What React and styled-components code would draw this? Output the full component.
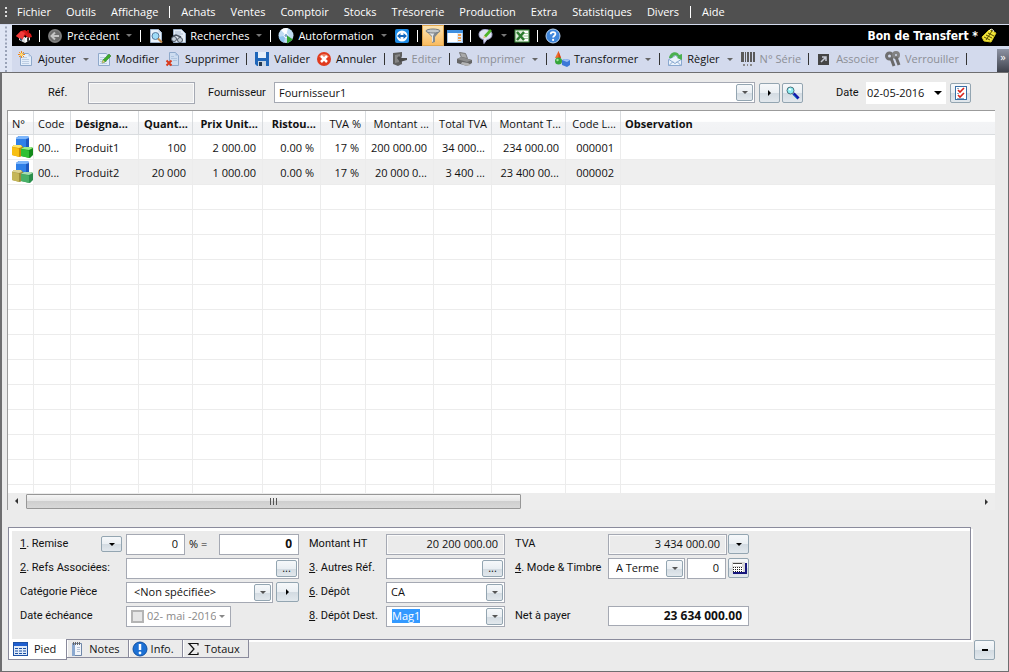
import React, { useState } from 'react';
import styled, { createGlobalStyle, css } from 'styled-components';

const uiFont = '"Open Sans", "Noto Sans", sans-serif';
const labelFont = 'Roboto, "Liberation Sans", sans-serif';
const titleFont = '"DejaVu Sans Condensed", "Noto Sans", sans-serif';

const GlobalStyle = createGlobalStyle`
    * { box-sizing: border-box; }
    body {
        margin: 0;
        background: #ebebeb;
        font-family: ${uiFont};
        font-size: 11px;
        line-height: 16px;
        color: #111;
    }
    button, input, select {
        margin: 0;
        padding: 0;
        border: 0;
        background: none;
        color: inherit;
        font: inherit;
    }
`;

/* ---------- icons ---------- */

const Svg = styled.svg`
    flex: none;
`;

const Icon = ({ size = 16, children }) => (
    <Svg width={size} height={size} viewBox="0 0 16 16" aria-hidden="true">
        {children}
    </Svg>
);

const HomeIcon = () => (
    <Icon>
        <path d="M3 7l6 2v6l-6-3z" fill="#d9d9d9" />
        <path d="M9 10l5-3v5l-5 3z" fill="#f8f8f8" />
        <path d="M0 8l5-5 4-1 6 4 1 3-4 1-3-3-3 5z" fill="#d81818" />
        <path d="M0 8l5-5 4 2-3 7z" fill="#f03c3c" />
        <path d="M11 2h2v4l-2-1z" fill="#b31010" />
        <path d="M11 10l2-1v4l-2 1z" fill="#333" />
        <path d="M4 10l2 1v2l-2-1z" fill="#357" />
    </Icon>
);

const BackIcon = () => (
    <Icon>
        <circle cx="8" cy="8" r="7" fill="#6c6c6c" />
        <circle cx="8" cy="8" r="6" fill="none" stroke="#858585" />
        <path d="M12 8H5M8 4.5L4.5 8 8 11.5" fill="none" stroke="#c4c4c4" strokeWidth="2" />
    </Icon>
);

const PreviewIcon = () => (
    <Icon>
        <path d="M2.5 1.500h8l3 3v10h-11z" fill="#e9f2fb" stroke="#9fb4cc" />
        <path d="M10.500 1.500v3h3z" fill="#bfd0e4" />
        <circle cx="7.500" cy="8" r="3.500" fill="#9edcf8" stroke="#56799c" />
        <path d="M10 10.500l4 4" stroke="#c28b4c" strokeWidth="2" />
    </Icon>
);

const SearchDocIcon = () => (
    <Icon>
        <path d="M3.500 1.500h8l4 4v9h-12z" fill="#e6edf6" stroke="#9db0c8" />
        <path d="M5 4h6M5 6h8" stroke="#a9bad0" />
        <circle cx="4" cy="11" r="2.500" fill="#c3cdd8" stroke="#4a5563" />
        <circle cx="10" cy="12" r="2.500" fill="#c3cdd8" stroke="#4a5563" />
        <path d="M3 8l3-1 5 2" fill="none" stroke="#4a5563" strokeWidth="1.500" />
    </Icon>
);

const DiscIcon = () => (
    <Icon>
        <circle cx="8" cy="7.500" r="7.500" fill="#bfdcf3" />
        <path d="M8 7.500L3 2A7.500 7.500 0 0 1 10 .3z" fill="#fff" />
        <path d="M8 7.500L.7 9a7.500 7.500 0 0 0 5 5.500z" fill="#8fc3ec" />
        <circle cx="8" cy="7.500" r="2" fill="#7fa8cb" stroke="#fff" />
        <path d="M9 7.500l6 4-6 4z" fill="#2fa52f" />
    </Icon>
);

const RemoteIcon = () => (
    <Icon>
        <rect x="1" y="1" width="14" height="14" rx="2" fill="#1d8be6" />
        <circle cx="8" cy="8" r="5.500" fill="#fff" />
        <path d="M3 8l3.500-3v2h3V5L13 8l-3.500 3V9h-3v2z" fill="#1668bd" />
    </Icon>
);

const FilterIcon = () => (
    <Icon>
        <path d="M1 3l6 6v6l3-1V9l5-6z" fill="#83898e" />
        <path d="M3 4l4 4v6l1-.5V8l2-4z" fill="#e3e6e8" />
        <ellipse cx="8" cy="3" rx="7" ry="2" fill="#c3c7ca" stroke="#777d82" />
    </Icon>
);

const PanelIcon = () => (
    <Icon>
        <rect x="0.500" y="2.500" width="15" height="12" fill="#fff" stroke="#9fc3ea" />
        <path d="M0 2h16v3H0z" fill="#3f8fe0" />
        <path d="M10 5h5v9h-5z" fill="#dcebfa" />
        <path d="M11 6h3v2h-3zM11 9h3v2h-3zM11 12h3v1h-3z" fill="#f0a050" />
    </Icon>
);

const ChatIcon = () => (
    <Icon>
        <path d="M7 1.500c4 0 7 2 7 5s-2 4.500-5 5l-3 4-.5-4C2.500 11 1 9 1 6.500s2-5 6-5z" fill="#dfe3f4" stroke="#a4a6cc" />
        <path d="M6 7.500l2 2L14 3l-2-2z" fill="#4fb52b" />
        <path d="M6 7.500l2 2-3 1z" fill="#e8c48a" />
    </Icon>
);

const ExcelIcon = () => (
    <Icon>
        <rect x="1" y="2" width="14" height="12" fill="#dcebd8" stroke="#3f8b3f" />
        <path d="M10 3h4v10h-4z" fill="#fff" />
        <path d="M10 5.500h4M10 8h4M10 10.500h4" stroke="#9cc79a" />
        <path d="M3 4l7 8M10 4l-7 8" stroke="#2b7a2e" strokeWidth="2.500" />
    </Icon>
);

const HelpIcon = () => (
    <Icon>
        <circle cx="8" cy="8" r="7" fill="#3f86dc" stroke="#b9d2ef" />
        <path d="M5.700 6.300C5.700 3.400 10.400 3.500 10.400 6c0 1.600-2.300 1.800-2.300 3.600" fill="none" stroke="#fff" strokeWidth="1.800" />
        <circle cx="8.100" cy="11.900" r="1.100" fill="#fff" />
    </Icon>
);

const NoteIcon = () => (
    <Icon>
        <path d="M1 9l7-7 7 3-5 9-7-1z" fill="#f3e63c" stroke="#d8ca20" />
        <path d="M3 9l6 3M5 7l6 3M7 5l6 3M5 12l6-9" stroke="#5a4e00" />
        <path d="M8 3l2-2 2 1 1 2" fill="none" stroke="#fffbd0" />
    </Icon>
);

const Sheet = () => (
    <>
        <path d="M2.500 2.500h8l3 3v9h-11z" fill="#e4eefa" stroke="#8fa9cb" />
        <path d="M10.500 2.500v3h3z" fill="#b5c8e2" />
        <path d="M4 6.500h5M4 8.500h7M4 10.500h7M4 12.500h7" stroke="#bccde3" />
    </>
);

const AddIcon = () => (
    <Icon>
        <Sheet />
        <path d="M3.500 0v7M0 3.500h7M1 1l5 5M6 1L1 6" stroke="#f08a1c" />
        <circle cx="3.500" cy="3.500" r="1.500" fill="#ffe27a" />
    </Icon>
);

const EditIcon = () => (
    <Icon>
        <Sheet />
        <path d="M6 12l1-3 6-6 2 2-6 6z" fill="#3cab2b" stroke="#247518" strokeWidth="0.500" />
        <path d="M6 12l1-3 2 2z" fill="#f1c98c" />
    </Icon>
);

const DeleteIcon = () => (
    <Icon>
        <path d="M4.500 1.500h6l3 3v10h-9z" fill="#cddcf0" stroke="#8fa9cb" />
        <path d="M10.500 1.500v3h3z" fill="#a0b9dc" />
        <path d="M6 5.500h3M6 7.500h6M8 9.500h4" stroke="#afc4df" />
        <path d="M1.500 9.500l5 5M6.500 9.500l-5 5" stroke="#d93a1c" strokeWidth="2" />
    </Icon>
);

const SaveIcon = () => (
    <Icon>
        <path d="M1 1h14v14H3l-2-2z" fill="#1f66ba" />
        <path d="M4 1h8v6H4z" fill="#e4eefa" />
        <path d="M4 10h8v5H4z" fill="#c8d4e2" />
        <path d="M5 11h3v4H5z" fill="#24384f" />
    </Icon>
);

const CancelIcon = () => (
    <Icon>
        <circle cx="8" cy="8" r="7" fill="#e03a1e" />
        <path d="M3 6a5.500 5 0 0 1 10 0z" fill="#f08468" />
        <path d="M5 5l6 6M11 5l-6 6" stroke="#fff" strokeWidth="2.500" />
    </Icon>
);

const EditorIcon = () => (
    <Icon>
        <path d="M1 2l9-1v4l-1 3 1 3v2l-4 2-5-2z" fill="#5e5e5e" />
        <path d="M3 4l5-1v3L7 11l-4 1z" fill="#858585" />
        <path d="M5 7l3 4 7-2V7H9L7 5z" fill="#4c4c4c" />
    </Icon>
);

const PrintIcon = () => (
    <Icon>
        <path d="M2.500 1.500l6 1 2 5-6-1z" fill="#a9a9a9" stroke="#777" />
        <path d="M0 8l4-2 11 3v3l-5 3L0 12z" fill="#666" />
        <path d="M0 8l4-2 11 3-5 2z" fill="#8d8d8d" />
        <path d="M5 11l6 1 3 2-4 1-6-2z" fill="#b4b4b4" />
    </Icon>
);

const ShapesIcon = () => (
    <Icon>
        <path d="M4.500 0L7 7H1z" fill="#f0702c" />
        <path d="M4.500 0L7 7H4.500z" fill="#d8401a" />
        <circle cx="4.500" cy="10" r="3.500" fill="#35a53a" />
        <circle cx="3.500" cy="9" r="1.200" fill="#a5e2a0" />
        <path d="M8 9l3-1 5 1v5l-3 2-5-2z" fill="#3c78d8" />
        <path d="M8 9l3-1 5 1-3 2z" fill="#9cc0f4" />
    </Icon>
);

const PayIcon = () => (
    <Icon>
        <path d="M1.500 8.500l7-4 6 4v6h-13z" fill="#eaf2fb" stroke="#8aa9d0" />
        <path d="M2 8.500l6 4 6-4M2 14.500l4-4M14 14.500l-4-4" fill="none" stroke="#8aa9d0" />
        <path d="M2 7c1-7 9-7 10-3l3-1v6l-5-2 1-1C9 3 6 4 5 7z" fill="#4bb050" />
    </Icon>
);

const BarcodeIcon = () => (
    <Icon>
        <path d="M1 1h3v10H1zM5 1h1v10H5zM7 1h2v10H7zM10 1h2v10h-2zM13 1h2v10h-2z" fill="#5a5a5a" />
        <path d="M3 13h2v2H3zM7 13h1v2H7zM10 13h2v2h-2z" fill="#8a8a8a" />
    </Icon>
);

const LinkIcon = () => (
    <Icon>
        <rect x="2" y="3" width="11" height="11" fill="#454545" />
        <path d="M5 11l5-5M6 6h4v4" fill="none" stroke="#c7cbd6" strokeWidth="1.500" />
    </Icon>
);

const KeysIcon = () => (
    <Icon>
        <circle cx="4.500" cy="5" r="3" fill="none" stroke="#707070" strokeWidth="3" />
        <circle cx="11" cy="4" r="2.500" fill="none" stroke="#828282" strokeWidth="3" />
        <path d="M6 7l3 8M11 6l3 8" stroke="#6a6a6a" strokeWidth="3" />
    </Icon>
);

const CubesSvg = styled.svg`
    display: block;
    margin-left: auto;
`;

const CubesIcon = ({ muted }) => (
    <CubesSvg width="22" height="22" viewBox="0 0 22 22" aria-hidden="true">
        <path d="M5 2l3-2h9l1 2v9l-3 2H5z" fill="#1c58c0" />
        <path d="M5 2l3-2h9l1 2-3 1H5z" fill="#7db6fb" />
        <path d="M5 3h10v9H5z" fill="#2f80e8" />
        <path d="M1 11l2-2h7l2 2v8l-3 2-8-2z" fill={muted ? '#9c8c3a' : '#c78a04'} />
        <path d="M1 11l2-2h7l1 2-3 1z" fill={muted ? '#ddd391' : '#ffe76a'} />
        <path d="M1 11l7 1.500V21l-7-2z" fill={muted ? '#c5b658' : '#f7bf12'} />
        <path d="M10 13l3-2h7l2 1v7l-3 3-9-2z" fill={muted ? '#2a8e4c' : '#138a1a'} />
        <path d="M10 13l3-2h7l2 1-4 2z" fill={muted ? '#a8dcb0' : '#9cec86'} />
        <path d="M10 13l8 1.500V22l-8-2z" fill={muted ? '#49b167' : '#2fc032'} />
    </CubesSvg>
);

const MagnifierIcon = () => (
    <Icon>
        <circle cx="5.500" cy="5.500" r="3.500" fill="#8ff0f4" stroke="#49717c" />
        <path d="M4 4l2 1" stroke="#fff" strokeWidth="1.500" />
        <path d="M8.500 8.500l5 5" stroke="#1218a8" strokeWidth="3" />
        <path d="M8 9.500l4 4.500" stroke="#2da0dc" />
    </Icon>
);

const ChecklistIcon = () => (
    <Icon>
        <rect x="2.500" y="1.500" width="11" height="13" fill="#fff" stroke="#3a6ea5" />
        <path d="M5 5l2 2 4-4M5 10l2 2 4-4" fill="none" stroke="#d8221a" strokeWidth="1.600" />
        <path d="M4 3.500h2M4 8.500h2M4 13.500h7" stroke="#8aa7c7" />
    </Icon>
);

const CalculatorIcon = () => (
    <Icon>
        <path d="M1 2h13v11H1z" fill="#d8d8d8" />
        <path d="M2 3h9v3H2z" fill="#fff" />
        <path d="M2 3.500h9" stroke="#444" />
        <path d="M2 7h10v5H2z" fill="#fff" />
        <path d="M2 7.500h10M2 9.500h10M2 11.500h10" stroke="#222" strokeDasharray="1 1" />
        <path d="M2 13h13V3" fill="none" stroke="#15157c" strokeWidth="2" />
    </Icon>
);

const TableIcon = () => (
    <Icon>
        <rect x="0.500" y="1.500" width="14" height="13" fill="#dfeaf8" stroke="#1c50a4" />
        <path d="M1 2h13v3H1z" fill="#1f5fd0" />
        <path d="M2 7.500h11M2 10h11M2 12.500h11" stroke="#1c50a4" strokeDasharray="3 1" />
    </Icon>
);

const NotebookIcon = () => (
    <Icon>
        <path d="M2.500 2.500h9v12h-9z" fill="#f2f5fa" stroke="#6f87a8" />
        <path d="M2 3h3v12H2z" fill="#8ba9d0" />
        <path d="M3.500 1v3M5.500 1v3M7.500 1v3M9.500 1v3" stroke="#666" />
        <path d="M7 6.500h3M7 8.500h3M7 10.500h3" stroke="#b5c4d8" />
    </Icon>
);

const InfoIcon = () => (
    <Icon>
        <circle cx="8" cy="8" r="7" fill="#1c70d4" stroke="#0e4fa3" />
        <path d="M8 3v6" stroke="#fff" strokeWidth="2.500" />
        <circle cx="8" cy="12" r="1.400" fill="#fff" />
    </Icon>
);

const SigmaIcon = () => (
    <Icon>
        <path d="M12 4.500v-2H3l5 5.500-5 5.500h9v-2" fill="none" stroke="#111" strokeWidth="1.200" />
    </Icon>
);

/* ---------- shared controls ---------- */

const Caret = styled.span`
    flex: none;
    width: 0;
    height: 0;
    border: solid transparent;
    ${p => p.$right
        ? css`border-width: 3px 0 3px 3px; border-left-color: ${p.$color || '#000'};`
        : css`border-width: 3px 3px 0; border-top-color: ${p.$color || '#000'};`}
`;

const SmallButton = styled.button`
    display: flex;
    flex: none;
    align-items: center;
    justify-content: center;
    width: ${p => p.$width || 21}px;
    height: ${p => p.$height || 20}px;
    border: 1px solid #93a5b1;
    border-radius: 2px;
    background: linear-gradient(#f6f8fa 0%, #eaeff3 50%, #d3dbe2 51%, #e2e8ed 100%);
`;

const Dash = styled.span`
    width: 6px;
    height: 2px;
    background: #000;
`;

const Field = styled.div`
    display: flex;
    align-items: center;
    flex: ${p => p.$width ? 'none' : 1};
    width: ${p => p.$width ? `${p.$width}px` : 'auto'};
    min-width: 0;
    height: ${p => p.$height || 21}px;
    padding: 0 1px;
    border: 1px solid #a5a9b3;
    background: ${p => p.$readOnly ? '#ebebeb' : '#fff'};
    box-shadow: ${p => p.$readOnly ? 'inset 0 0 0 1px #fafafa' : 'none'};
    color: ${p => p.$muted ? '#8a8a8a' : 'inherit'};
`;

const TextInput = styled.input`
    flex: 1;
    width: 100%;
    min-width: 0;
    height: 16px;
    padding: 0 5px;
    outline: 0;
    text-align: ${p => p.$right ? 'right' : 'left'};
    font-weight: ${p => p.$bold ? 700 : 400};
    font-size: ${p => p.$bold ? 12 : 11}px;
`;

const SelectBox = styled.div`
    display: grid;
    flex: ${p => p.$width ? 'none' : 1};
    width: ${p => p.$width ? `${p.$width}px` : 'auto'};
    height: 21px;
    align-items: center;
    border: 1px solid #a5a9b3;
    background: #fff;

    > * {
        grid-area: 1 / 1;
    }
`;

const NativeSelect = styled.select`
    width: 100%;
    height: 19px;
    padding: 0 20px 0 ${p => p.$indent || 4}px;
    appearance: none;
    outline: 0;
`;

const ArrowFace = styled(SmallButton).attrs({ as: 'span' })`
    justify-self: end;
    margin-right: 1px;
    pointer-events: none;
`;

const Combo = ({ id, options, width, indent }) => (
    <SelectBox $width={width}>
        <NativeSelect id={id} $indent={indent}>
            {options.map(o => <option key={o}>{o}</option>)}
        </NativeSelect>
        <ArrowFace $width={17} $height={17}><Caret $color="#555" /></ArrowFace>
    </SelectBox>
);

/* ---------- bars ---------- */

const Page = styled.div`
    display: flex;
    flex-direction: column;
    height: 100vh;
    min-height: 480px;
`;

const Grip = styled.span`
    flex: none;
    width: ${p => p.$width || 12}px;
    height: ${p => p.$height || 18}px;
    background: radial-gradient(circle, ${p => p.$color || '#9aa3b8'} 1px, transparent 1px) center / 4px 4px repeat-y;
`;

const ToolGrip = styled(Grip)`
    align-self: stretch;
    height: auto;
    background-color: #dfe5f4;
`;

const MenuBar = styled.nav`
    display: flex;
    align-items: center;
    flex: none;
    height: 24px;
    gap: 15px;
    padding-left: 2px;
    background: #505050;
    color: #fff;

    a {
        color: inherit;
        text-decoration: none;
    }
`;

const MenuGrip = styled(Grip)`
    margin-right: -8px;
`;

const MenuSeparator = styled.span`
    width: 1px;
    height: 12px;
    margin: 0 -4px;
    background: #fff;
`;

const ToolRow = styled.div`
    display: flex;
    align-items: center;
    flex: none;
    height: ${p => p.$dark ? 22 : 26}px;
    border-top: ${p => p.$dark ? '1px solid #d3daed' : '0'};
    background: #d3daed;
    color: ${p => p.$dark ? '#fff' : '#111'};
`;

const Separator = styled.span`
    flex: none;
    width: 1px;
    height: 12px;
    margin: 0 4px;
    background: #333;
`;

const ToolItems = styled.div`
    display: flex;
    align-items: center;
    flex: 1;
    align-self: stretch;
    min-width: 0;
    padding-left: ${p => p.$dark ? 1 : 3}px;
    background: ${p => p.$dark ? '#000' : 'none'};

    ${Separator} {
        background: ${p => p.$dark ? '#fff' : '#333'};
    }
`;

const ToolButton = styled.button`
    display: flex;
    align-items: center;
    flex: none;
    gap: 4px;
    height: 21px;
    padding: 0 3px;
    white-space: nowrap;
    background: ${p => p.$pressed ? 'linear-gradient(#fde7b8, #f9b95c)' : 'none'};
    box-shadow: ${p => p.$pressed ? 'inset 0 0 0 1px #e0a64e' : 'none'};

    &:disabled {
        color: #8d8f96;
    }

    ${Caret} {
        margin: 0 1px 0 3px;
    }
`;

const Title = styled.h1`
    display: flex;
    align-items: center;
    gap: 3px;
    margin: 0 12px 0 auto;
    font-family: ${titleFont};
    font-size: 12px;
    font-weight: 700;
`;

const OverflowChip = styled.button`
    flex: none;
    align-self: stretch;
    width: 12px;
    margin-top: 3px;
    padding-bottom: 8px;
    background: linear-gradient(#8d93a3, #3e424c);
    color: #fff;
    line-height: 8px;
`;

const Tool = ({ icon, text, menu, disabled, pressed, label, dark }) => (
    <ToolButton disabled={disabled} $pressed={pressed} aria-label={label}>
        {icon}
        {text}
        {menu && <Caret $color={dark ? '#777' : '#666'} />}
    </ToolButton>
);

/* ---------- document area ---------- */

const Frame = styled.main`
    display: flex;
    flex-direction: column;
    flex: 1;
    min-height: 0;
    border: solid #6e6e70;
    border-width: 1px 1px 1px 2px;
`;

const HeaderForm = styled.div`
    display: flex;
    align-items: center;
    flex: none;
    height: 37px;
    padding: 2px 37px 0 46px;
`;

const Label = styled.label`
    font-family: ${labelFont};
    white-space: nowrap;
`;

const FormLabel = styled(Label)`
    flex: none;
    width: ${p => p.$width}px;
    margin-left: ${p => p.$gap || 0}px;
`;

const ButtonPair = styled.div`
    display: flex;
    gap: 2px;
    margin-left: 4px;
`;

const DateField = styled.div`
    display: flex;
    align-items: center;
    width: 80px;
    height: 22px;
    margin-right: 4px;
    padding-right: 4px;
    background: #fff;

    input {
        padding: 0 1px;
    }
`;

const BigCaret = styled(Caret)`
    border-width: 4px 4px 0;
`;

const GridBox = styled.section`
    display: flex;
    flex-direction: column;
    flex: 1;
    min-height: 0;
    margin: 0 13px 0 5px;
    border: solid #9b9b9b;
    border-width: 1px 0 0 1px;
    background: #fff;
`;

const GridBody = styled.div`
    flex: 1;
    min-height: 0;
    overflow: hidden;
`;

const Table = styled.table`
    width: 100%;
    table-layout: fixed;
    border-collapse: separate;
    border-spacing: 0;
    white-space: nowrap;

    th, td {
        overflow: hidden;
        padding: 0 4px;
        border-right: 1px solid #ececec;
        border-bottom: 1px solid #ececec;
    }
    th {
        height: 24px;
        padding-top: 2px;
        border-color: #d9dcdf;
        background: linear-gradient(#fff 0%, #fff 45%, #f3f4f6 50%, #f1f2f4 100%);
    }
    td {
        height: 25px;
    }
    th:last-child, td:last-child {
        border-right: 0;
    }
`;

const HeadCell = styled.th`
    font-weight: ${p => p.$bold ? 700 : 400};
    text-align: ${p => p.$align || 'left'};
`;

const Row = styled.tr`
    background: ${p => p.$alt ? '#efefef' : '#fff'};
`;

const Cell = styled.td`
    text-align: ${p => p.$align || 'left'};

    && {
        padding: ${p => p.$icon ? 0 : '2px 6px 0 4px'};
        background: ${p => p.$icon ? '#fff' : 'none'};
    }
`;

const ScrollBar = styled.div`
    display: flex;
    align-items: center;
    flex: none;
    height: 17px;
    background: #ededed;
`;

const ScrollArrow = styled.button`
    display: flex;
    align-items: center;
    justify-content: center;
    width: 18px;
    height: 17px;
    transform: ${p => p.$back ? 'rotate(180deg)' : 'none'};
`;

const Track = styled.div`
    flex: 1;
`;

const Thumb = styled.div`
    display: flex;
    align-items: center;
    justify-content: center;
    gap: 2px;
    width: 52%;
    height: 15px;
    border: 1px solid #979797;
    border-radius: 1px;
    background: linear-gradient(#f5f5f5 0%, #e6e6e6 45%, #cfcfcf 50%, #d8d8d8 100%);

    i {
        width: 1px;
        height: 7px;
        background: #555;
    }
`;

const columns = [
    { title: 'N°', width: 26 },
    { title: 'Code', width: 37 },
    { title: 'Désigna...', width: 68, bold: true },
    { title: 'Quant...', width: 54, bold: true, align: 'right' },
    { title: 'Prix Unit...', width: 70, bold: true, align: 'right' },
    { title: 'Ristou...', width: 58, bold: true, align: 'right' },
    { title: 'TVA %', width: 45, align: 'right' },
    { title: 'Montant ...', width: 68, align: 'right' },
    { title: 'Total TVA', width: 58, align: 'right' },
    { title: 'Montant T...', width: 74, align: 'right' },
    { title: 'Code L...', width: 55, align: 'right' },
    { title: 'Observation', bold: true },
];

const lines = [
    ['00...', 'Produit1', '100', '2 000.00', '0.00 %', '17 %', '200 000.00', '34 000...', '234 000.00', '000001', ''],
    ['00...', 'Produit2', '20 000', '1 000.00', '0.00 %', '17 %', '20 000 0...', '3 400 ...', '23 400 00...', '000002', ''],
];

const BLANK_ROWS = 40;

const LinesGrid = () => (
    <GridBox>
        <GridBody>
            <Table>
                <colgroup>
                    {columns.map(c => <col key={c.title} width={c.width} />)}
                </colgroup>
                <thead>
                    <tr>
                        {columns.map(c => (
                            <HeadCell key={c.title} $bold={c.bold} $align={c.align}>{c.title}</HeadCell>
                        ))}
                    </tr>
                </thead>
                <tbody>
                    {lines.map((line, i) => (
                        <Row key={line[1]} $alt={i % 2 === 1}>
                            <Cell $icon><CubesIcon muted={i % 2 === 1} /></Cell>
                            {line.map((value, j) => (
                                <Cell key={j} $align={columns[j + 1].align}>{value}</Cell>
                            ))}
                        </Row>
                    ))}
                    {Array.from({ length: BLANK_ROWS }, (_, i) => (
                        <Row key={i}>
                            {columns.map(c => <td key={c.title} />)}
                        </Row>
                    ))}
                </tbody>
            </Table>
        </GridBody>
        <ScrollBar>
            <ScrollArrow $back aria-label="Défiler à gauche"><Caret $right $color="#333" /></ScrollArrow>
            <Track><Thumb><i /><i /><i /></Thumb></Track>
            <ScrollArrow aria-label="Défiler à droite"><Caret $right $color="#333" /></ScrollArrow>
        </ScrollBar>
    </GridBox>
);

/* ---------- footer ---------- */

const FooterPanel = styled.section`
    display: grid;
    flex: none;
    grid-template-columns: 106px 173px 87px 119px 103px 141px;
    grid-template-rows: repeat(4, 24px);
    align-items: center;
    margin: 17px 37px 0 6px;
    padding: 4px 0 11px 11px;
    border: 1px solid #8a8b9c;
    box-shadow: inset 3px 3px 0 #fff, 2px 2px 0 #fff;

    > :nth-child(6n + 3), > :nth-child(6n + 5) {
        padding-left: 10px;
    }
`;

const FieldGroup = styled.div`
    display: flex;
    align-items: center;
    gap: ${p => p.$gap || 0}px;
`;

const LabelGroup = styled.div`
    display: flex;
    align-items: center;
    justify-content: space-between;
    padding-right: 4px;
`;

const Percent = styled.span`
    width: 34px;
    padding-left: 4px;
`;

const EditableValue = styled.input`
    field-sizing: content;
    height: 14px;
    margin: 0 auto 0 4px;
    background: #3399ff;
    color: #fff;
    line-height: 14px;
`;

const DueDate = styled(Field)`
    gap: 3px;
    padding-left: 4px;

    input[type='checkbox'] {
        flex: none;
        width: 13px;
        height: 13px;
        appearance: none;
        border: 2px solid #b4b4b4;
        background: #e6e6e6;
    }
    ${TextInput} {
        padding: 0;
    }
    ${Caret} {
        margin-right: 4px;
    }
`;

const BottomBar = styled.div`
    display: flex;
    align-items: flex-start;
    justify-content: space-between;
    flex: none;
    height: 31px;
    padding: 0 13px 0 6px;
`;

const Tabs = styled.div`
    display: flex;
    align-items: flex-start;
`;

const Tab = styled.button`
    display: flex;
    align-items: center;
    gap: ${p => p.$active ? 5 : 3}px;
    height: ${p => p.$active ? 21 : 18}px;
    margin-top: ${p => p.$active ? -1 : 0}px;
    padding: 0 ${p => p.$active ? 10 : 8}px 0 ${p => p.$active ? 4 : 3}px;
    border: 1px solid #8a8b9c;
    border-top: 0;
    background: ${p => p.$active ? '#fff' : '#ebebeb'};
    box-shadow: ${p => p.$active ? 'none' : 'inset 1px 0 0 #fff'};

    & + & {
        border-left: 0;
    }
`;

const tabList = [
    { name: 'Pied', icon: <TableIcon /> },
    { name: 'Notes', icon: <NotebookIcon /> },
    { name: 'Info.', icon: <InfoIcon /> },
    { name: 'Totaux', icon: <SigmaIcon /> },
];

const Footer = () => (
    <FooterPanel>
        <LabelGroup>
            <Label htmlFor="remise"><u>1</u>. Remise</Label>
            <SmallButton $height={16} aria-label="Type de remise"><Caret /></SmallButton>
        </LabelGroup>
        <FieldGroup>
            <Field $width={59}><TextInput id="remise" $right defaultValue="0" /></Field>
            <Percent>% =</Percent>
            <Field><TextInput $right $bold aria-label="Montant remise" defaultValue="0" /></Field>
        </FieldGroup>
        <Label htmlFor="ht">Montant HT</Label>
        <Field $readOnly><TextInput id="ht" $right readOnly value="20 200 000.00" /></Field>
        <Label htmlFor="tva">TVA</Label>
        <FieldGroup $gap={1}>
            <Field $readOnly><TextInput id="tva" $right readOnly value="3 434 000.00" /></Field>
            <SmallButton aria-label="Détail TVA"><Caret /></SmallButton>
        </FieldGroup>

        <Label htmlFor="refs"><u>2</u>. Refs Associées:</Label>
        <Field>
            <TextInput id="refs" />
            <SmallButton $height={17} aria-label="Choisir les références">...</SmallButton>
        </Field>
        <Label htmlFor="autres"><u>3</u>. Autres Réf.</Label>
        <Field>
            <TextInput id="autres" />
            <SmallButton $height={17} aria-label="Choisir une référence">...</SmallButton>
        </Field>
        <Label htmlFor="mode"><u>4</u>. Mode &amp; Timbre</Label>
        <FieldGroup $gap={2}>
            <Combo id="mode" width={77} indent={7} options={['A Terme', 'Comptant']} />
            <Field><TextInput $right aria-label="Timbre" defaultValue="0" /></Field>
            <SmallButton aria-label="Calculer"><CalculatorIcon /></SmallButton>
        </FieldGroup>

        <Label htmlFor="categorie">Catégorie Pièce</Label>
        <FieldGroup $gap={3}>
            <Combo id="categorie" indent={7} options={['<Non spécifiée>']} />
            <SmallButton $width={23} aria-label="Ouvrir la catégorie"><Caret $right /></SmallButton>
        </FieldGroup>
        <Label htmlFor="depot"><u>6</u>. Dépôt</Label>
        <Combo id="depot" options={['CA', 'Mag1']} />
        <span />
        <span />

        <Label htmlFor="echeance">Date échéance</Label>
        <DueDate $width={105} $muted>
            <input type="checkbox" disabled aria-label="Activer la date d'échéance" />
            <TextInput id="echeance" disabled value="02- mai -2016" />
            <Caret $color="#888" />
        </DueDate>
        <Label htmlFor="depotDest"><u>8</u>. Dépôt Dest.</Label>
        <Field>
            <EditableValue id="depotDest" size="3" defaultValue="Mag1" />
            <SmallButton $width={17} $height={17} aria-label="Liste des dépôts"><Caret $color="#555" /></SmallButton>
        </Field>
        <Label htmlFor="net">Net à payer</Label>
        <Field $height={20}><TextInput id="net" $right $bold readOnly value="23 634 000.00" /></Field>
    </FooterPanel>
);

const App = () => {
    const [activeTab, setActiveTab] = useState('Pied');

    return (
        <Page>
            <GlobalStyle />

            <MenuBar>
                <MenuGrip $width={8} $height={14} $color="#ddd" />
                <a href="#fichier">Fichier</a>
                <a href="#outils">Outils</a>
                <a href="#affichage">Affichage</a>
                <MenuSeparator />
                <a href="#achats">Achats</a>
                <a href="#ventes">Ventes</a>
                <a href="#comptoir">Comptoir</a>
                <a href="#stocks">Stocks</a>
                <a href="#tresorerie">Trésorerie</a>
                <a href="#production">Production</a>
                <a href="#extra">Extra</a>
                <a href="#statistiques">Statistiques</a>
                <a href="#divers">Divers</a>
                <MenuSeparator />
                <a href="#aide">Aide</a>
            </MenuBar>

            <ToolRow $dark>
                <ToolGrip />
                <ToolItems $dark>
                    <Tool icon={<HomeIcon />} label="Accueil" />
                    <Separator />
                    <Tool icon={<BackIcon />} text="Précédent" menu dark />
                    <Separator />
                    <Tool icon={<PreviewIcon />} label="Aperçu" />
                    <Tool icon={<SearchDocIcon />} text="Recherches" menu dark />
                    <Separator />
                    <Tool icon={<DiscIcon />} text="Autoformation" menu dark />
                    <Tool icon={<RemoteIcon />} label="Assistance" />
                    <Separator />
                    <Tool icon={<FilterIcon />} label="Filtrer" pressed />
                    <Tool icon={<PanelIcon />} label="Volet" />
                    <Separator />
                    <Tool icon={<ChatIcon />} label="Commentaires" menu dark />
                    <Tool icon={<ExcelIcon />} label="Excel" />
                    <Separator />
                    <Tool icon={<HelpIcon />} label="Aide" />
                    <Title>Bon de Transfert * <NoteIcon /></Title>
                </ToolItems>
            </ToolRow>

            <ToolRow>
                <ToolGrip />
                <ToolItems>
                    <Tool icon={<AddIcon />} text="Ajouter" menu />
                    <Tool icon={<EditIcon />} text="Modifier" />
                    <Tool icon={<DeleteIcon />} text="Supprimer" />
                    <Separator />
                    <Tool icon={<SaveIcon />} text="Valider" />
                    <Tool icon={<CancelIcon />} text="Annuler" />
                    <Separator />
                    <Tool icon={<EditorIcon />} text="Editer" disabled />
                    <Separator />
                    <Tool icon={<PrintIcon />} text="Imprimer" menu disabled />
                    <Separator />
                    <Tool icon={<ShapesIcon />} text="Transformer" menu />
                    <Separator />
                    <Tool icon={<PayIcon />} text="Règler" menu />
                    <Tool icon={<BarcodeIcon />} text="N° Série" disabled />
                    <Separator />
                    <Tool icon={<LinkIcon />} text="Associer" disabled />
                    <Tool icon={<KeysIcon />} text="Verrouiller" disabled />
                    <Separator />
                </ToolItems>
                <OverflowChip aria-label="Plus d'outils">»</OverflowChip>
            </ToolRow>

            <Frame>
                <HeaderForm>
                    <FormLabel htmlFor="ref" $width={40}>Réf.</FormLabel>
                    <Field $width={107} $height={22} $readOnly><TextInput id="ref" readOnly /></Field>
                    <FormLabel htmlFor="fournisseur" $width={66} $gap={13}>Fournisseur</FormLabel>
                    <Combo id="fournisseur" options={['Fournisseur1']} />
                    <ButtonPair>
                        <SmallButton aria-label="Ouvrir le fournisseur"><Caret $right /></SmallButton>
                        <SmallButton aria-label="Rechercher un fournisseur"><MagnifierIcon /></SmallButton>
                    </ButtonPair>
                    <FormLabel htmlFor="date" $width={30} $gap={33}>Date</FormLabel>
                    <DateField>
                        <TextInput id="date" defaultValue="02-05-2016" />
                        <BigCaret />
                    </DateField>
                    <SmallButton aria-label="Valider la date"><ChecklistIcon /></SmallButton>
                </HeaderForm>

                <LinesGrid />
                <Footer />

                <BottomBar>
                    <Tabs role="tablist">
                        {tabList.map(t => (
                            <Tab
                                key={t.name}
                                role="tab"
                                aria-selected={activeTab === t.name}
                                $active={activeTab === t.name}
                                onClick={() => setActiveTab(t.name)}
                            >
                                {t.icon}
                                {t.name}
                            </Tab>
                        ))}
                    </Tabs>
                    <SmallButton aria-label="Réduire"><Dash /></SmallButton>
                </BottomBar>
            </Frame>
        </Page>
    );
};

export default App;
